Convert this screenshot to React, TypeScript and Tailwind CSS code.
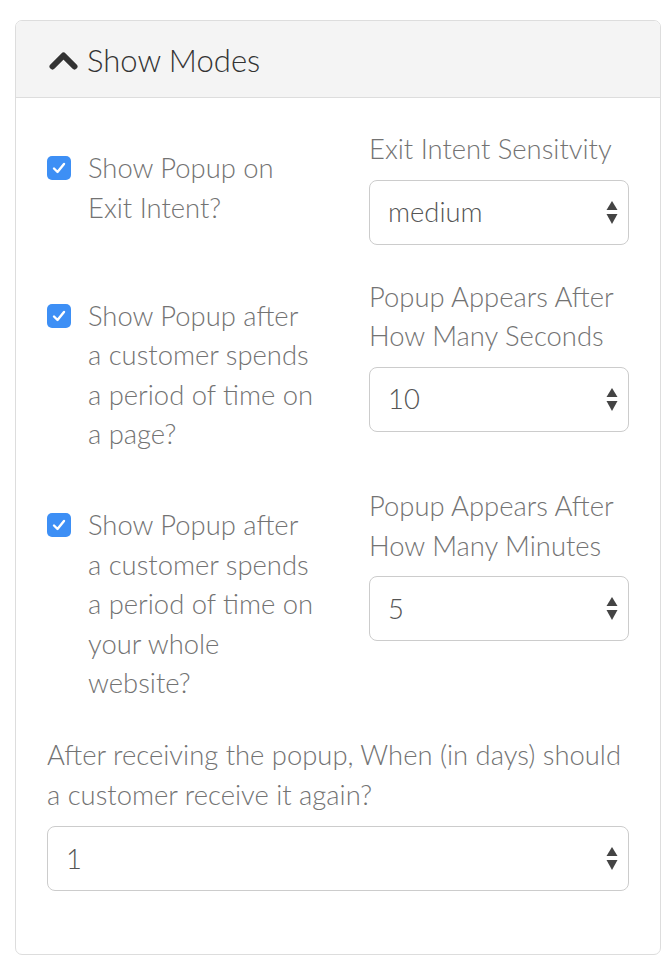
import type { ReactNode } from 'react'

const FONT = { fontFamily: 'Lato, "Open Sans", sans-serif' }

function ChevronUp() {
  return (
    <svg width="29" height="19" viewBox="0 0 29 19" className="shrink-0">
      <path
        d="M3.5 15.5 L14.5 4.5 L25.5 15.5"
        fill="none"
        stroke="#333"
        strokeWidth="6"
        strokeLinecap="round"
        strokeLinejoin="round"
      />
    </svg>
  )
}

function SelectArrows() {
  return (
    <svg width="12" height="23" viewBox="0 0 12 23" className="shrink-0">
      <path d="M6 0 L11.5 9 L0.5 9 Z" fill="#444" />
      <path d="M6 23 L11.5 13 L0.5 13 Z" fill="#444" />
    </svg>
  )
}

function FakeSelect({ value }: { value: string }) {
  return (
    <div className="flex h-[65px] w-full items-center justify-between rounded-[8px] border border-[#cccccc] bg-white pl-[18px] pr-[10px] text-[27.4px] text-[#555555]">
      <span>{value}</span>
      <SelectArrows />
    </div>
  )
}

function CheckMark() {
  return (
    <span className="mt-[8px] flex h-[24px] w-[24px] shrink-0 items-center justify-center rounded-[5px] bg-[#3d8ff5]">
      <svg width="14" height="12" viewBox="0 0 14 12">
        <path
          d="M2 6.5 L5.5 10 L12 2"
          fill="none"
          stroke="#fff"
          strokeWidth="2.4"
          strokeLinecap="round"
          strokeLinejoin="round"
        />
      </svg>
    </span>
  )
}

function ModeRow({ label, right, children }: { label: ReactNode; right: string; children: ReactNode }) {
  return (
    <div className="mb-[32px] grid grid-cols-[322px_260px]">
      <div className="flex gap-[17px] pt-[19px]">
        <CheckMark />
        <p className="w-[228px] text-[#737373]">{children}</p>
      </div>
      <div>
        <p className="text-[#737373]">{label}</p>
        <div className="mt-[11px]">
          <FakeSelect value={right} />
        </div>
      </div>
    </div>
  )
}

export default function App() {
  return (
    <div className="min-h-[960px] bg-white pt-[20px] pl-[15px] font-light" style={FONT}>
      <div className="w-[646px] overflow-hidden rounded-[7px] border border-[#dddddd] bg-white">
        <div className="flex h-[77px] items-center gap-[9px] border-b border-[#dddddd] bg-[#f4f4f4] pl-[33px] pt-[2px]">
          <ChevronUp />
          <h2 className="text-[31px] text-[#333333]">Show Modes</h2>
        </div>

        <div className="px-[31px] pt-[31px] pb-[63px] text-[27.4px] leading-[39.6px]">
          <ModeRow label="Exit Intent Sensitvity" right="medium">
            Show Popup on Exit Intent?
          </ModeRow>
          <ModeRow label="Popup Appears After How Many Seconds" right="10">
            Show Popup after a customer spends a period of time on a page?
          </ModeRow>
          <ModeRow label="Popup Appears After How Many Minutes" right="5">
            Show Popup after a customer spends a period of time on your whole website?
          </ModeRow>

          <div>
            <p className="text-[#737373]">After receiving the popup, When (in days) should a customer receive it again?</p>
            <div className="mt-[12px]">
              <FakeSelect value="1" />
            </div>
          </div>
        </div>
      </div>
    </div>
  )
}
